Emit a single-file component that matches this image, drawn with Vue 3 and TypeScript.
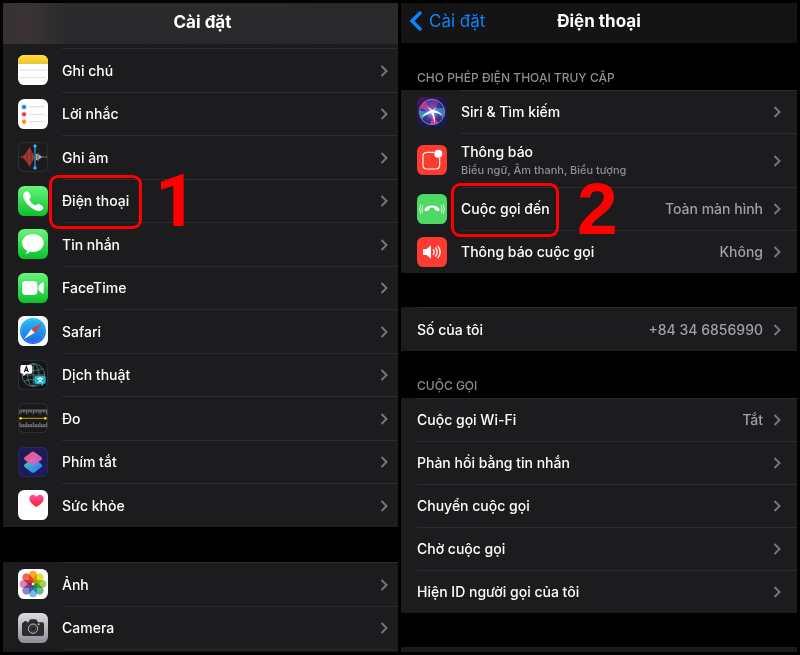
<script setup lang="ts">
interface Item {
  label: string
  icon?: string
  detail?: string
  value?: string
  step?: string
}

const apps: Item[] = [
  { label: 'Ghi chú', icon: 'notes' },
  { label: 'Lời nhắc', icon: 'reminders' },
  { label: 'Ghi âm', icon: 'memos' },
  { label: 'Điện thoại', icon: 'phone', step: '1' },
  { label: 'Tin nhắn', icon: 'messages' },
  { label: 'FaceTime', icon: 'facetime' },
  { label: 'Safari', icon: 'safari' },
  { label: 'Dịch thuật', icon: 'translate' },
  { label: 'Đo', icon: 'measure' },
  { label: 'Phím tắt', icon: 'shortcuts' },
  { label: 'Sức khỏe', icon: 'health' },
]

const media: Item[] = [
  { label: 'Ảnh', icon: 'photos' },
  { label: 'Camera', icon: 'camera' },
]

const access: Item[] = [
  { label: 'Siri & Tìm kiếm', icon: 'siri' },
  { label: 'Thông báo', icon: 'notify', detail: 'Biểu ngữ, Âm thanh, Biểu tượng' },
  { label: 'Cuộc gọi đến', icon: 'incoming', value: 'Toàn màn hình', step: '2' },
  { label: 'Thông báo cuộc gọi', icon: 'announce', value: 'Không' },
]

const mine: Item[] = [{ label: 'Số của tôi', value: '+84 34 6856990' }]

const calls: Item[] = [
  { label: 'Cuộc gọi Wi-Fi', value: 'Tắt' },
  { label: 'Phản hồi bằng tin nhắn' },
  { label: 'Chuyển cuộc gọi' },
  { label: 'Chờ cuộc gọi' },
  { label: 'Hiện ID người gọi của tôi' },
]

const petals = [
  { angle: 0, color: '#f9a11b' },
  { angle: 45, color: '#e3dd1a' },
  { angle: 90, color: '#9ccb3b' },
  { angle: 135, color: '#4fb98a' },
  { angle: 180, color: '#6cb0e4' },
  { angle: 225, color: '#8676c0' },
  { angle: 270, color: '#d479ae' },
  { angle: 315, color: '#f2544a' },
]

const waves = [
  [6, 2], [11, 4], [15, 8], [19, 14], [23, 22], [27, 34], [31, 46], [35, 58], [39, 44], [43, 26], [47, 14],
]
const echoes = [
  [56, 18], [60, 22], [64, 12], [68, 8], [72, 4], [77, 2], [82, 2], [86, 2],
]
const ticks = Array.from({ length: 17 }, (_, i) => ({ x: 6 + i * 5, long: i % 4 === 0 }))
</script>

<template>
  <svg class="sprite" aria-hidden="true">
    <defs>
      <linearGradient id="g-green" x1="0" y1="0" x2="0" y2="1">
        <stop offset="0" stop-color="#67f67c" /><stop offset="1" stop-color="#0bc02b" />
      </linearGradient>
      <linearGradient id="g-yellow" x1="0" y1="0" x2="0" y2="1">
        <stop offset="0" stop-color="#fddc4e" /><stop offset="1" stop-color="#f9c809" />
      </linearGradient>
      <linearGradient id="g-blue" x1="0" y1="0" x2="0" y2="1">
        <stop offset="0" stop-color="#22c3f6" /><stop offset="1" stop-color="#1f63e0" />
      </linearGradient>
      <linearGradient id="g-pink" x1="0" y1="0" x2="1" y2="1">
        <stop offset="0" stop-color="#fb5a6a" /><stop offset="0.5" stop-color="#e865a8" /><stop offset="1" stop-color="#b45bdc" />
      </linearGradient>
      <linearGradient id="g-teal" x1="0" y1="0" x2="1" y2="0.6">
        <stop offset="0" stop-color="#38d6a0" /><stop offset="0.5" stop-color="#30a8e0" /><stop offset="1" stop-color="#3a7af0" />
      </linearGradient>
      <linearGradient id="g-heart" x1="0" y1="0" x2="0" y2="1">
        <stop offset="0" stop-color="#fd4fae" /><stop offset="1" stop-color="#fb2020" />
      </linearGradient>
      <linearGradient id="g-silver" x1="0" y1="0" x2="0" y2="1">
        <stop offset="0" stop-color="#dcdce0" /><stop offset="1" stop-color="#8e8e94" />
      </linearGradient>
      <linearGradient id="g-siri" x1="0" y1="0" x2="1" y2="1">
        <stop offset="0" stop-color="#501560" /><stop offset="0.5" stop-color="#1c1850" /><stop offset="1" stop-color="#10204c" />
      </linearGradient>
      <radialGradient id="g-orb" cx="0.5" cy="0.5" r="0.5">
        <stop offset="0" stop-color="#ffffff" /><stop offset="0.2" stop-color="#8f8ce0" /><stop offset="0.6" stop-color="#43389c" /><stop offset="1" stop-color="#2a2470" />
      </radialGradient>
      <clipPath id="c-orb"><circle cx="45" cy="45" r="37" /></clipPath>
    </defs>

    <symbol id="notes" viewBox="0 0 90 90">
      <rect width="90" height="90" rx="19" fill="#fff" />
      <path d="M0 24V19A19 19 0 0 1 19 0H71A19 19 0 0 1 90 19V24Z" fill="url(#g-yellow)" />
      <path d="M0 25.500H90" stroke="#b9a565" stroke-width="2" />
      <path d="M3 45.500H87M3 68H87" stroke="#dedee2" stroke-width="3" />
    </symbol>

    <symbol id="reminders" viewBox="0 0 90 90">
      <rect width="90" height="90" rx="19" fill="#fff" />
      <path d="M34 23H80M34 46H80M34 68H80" stroke="#dcdce0" stroke-width="3" />
      <circle cx="18" cy="24" r="9" fill="#d3e6fd" /><circle cx="18" cy="24" r="6" fill="#1682f8" />
      <circle cx="18" cy="46" r="9" fill="#fddad8" /><circle cx="18" cy="46" r="6" fill="#f5342f" />
      <circle cx="18" cy="68" r="9" fill="#fde8cc" /><circle cx="18" cy="68" r="6" fill="#fb9410" />
    </symbol>

    <symbol id="memos" viewBox="0 0 90 90">
      <rect x="1" y="1" width="88" height="88" rx="18" fill="#1b1b1d" stroke="#3d3d40" stroke-width="2" />
      <path v-for="w in waves" :key="w[0]" :d="`M${w[0]} ${45 - w[1] / 2}v${w[1]}`" stroke="#b8382f" stroke-width="3.500" />
      <path v-for="w in echoes" :key="w[0]" :d="`M${w[0]} ${45 - w[1] / 2}v${w[1]}`" stroke="#c9c9cc" stroke-width="3" />
      <path d="M51 12V79" stroke="#1e9bd6" stroke-width="4" />
      <circle cx="51" cy="12" r="5" fill="#2cb8f2" /><circle cx="51" cy="78" r="5" fill="#2cb8f2" />
    </symbol>

    <symbol id="phone" viewBox="0 0 90 90">
      <rect width="90" height="90" rx="19" fill="url(#g-green)" />
      <path d="M20 19C23 15 28 14 31 18L38 28C40 31 39 34 36 37C34 39 34 41 36 44C39 49 44 54 50 57C52 58 54 58 56 56C59 53 62 53 65 55L74 61C77 64 77 68 73 71C68 76 61 76 53 73C37 66 23 52 17 37C14 30 15 24 20 19Z" fill="#fff" />
    </symbol>

    <symbol id="messages" viewBox="0 0 90 90">
      <rect width="90" height="90" rx="19" fill="url(#g-green)" />
      <path d="M45 15C63 15 77 27 77 42S63 69 45 69C41 69 38 69 35 68C32 72 28 74 23 74C26 71 27 68 27 65C18 60 12 52 12 42C12 27 27 15 45 15Z" fill="#fff" />
    </symbol>

    <symbol id="facetime" viewBox="0 0 90 90">
      <rect width="90" height="90" rx="19" fill="url(#g-green)" />
      <rect x="12" y="24" width="46" height="42" rx="11" fill="#fff" />
      <path d="M61 39L72 29C75 27 77 28 77 31V59C77 62 75 63 72 61L61 51Z" fill="#fff" />
    </symbol>

    <symbol id="safari" viewBox="0 0 90 90">
      <rect width="90" height="90" rx="19" fill="#fafafa" />
      <circle cx="45" cy="45" r="39" fill="url(#g-blue)" />
      <circle cx="45" cy="45" r="34" fill="none" stroke="#a8daf8" stroke-width="3" stroke-dasharray="1 3" />
      <path d="M72 22L40 40L50 50Z" fill="#f5352d" />
      <path d="M18 69L40 40L50 50Z" fill="#fff" />
    </symbol>

    <symbol id="translate" viewBox="0 0 90 90">
      <rect x="1" y="1" width="88" height="88" rx="18" fill="#161618" stroke="#3d3d40" stroke-width="2" />
      <g fill="none" stroke="#5f8f9c" stroke-width="2">
        <circle cx="46" cy="45" r="34" />
        <ellipse cx="46" cy="45" rx="17" ry="34" />
        <path d="M46 11V79M12 45H80M18 26Q46 38 74 26M18 64Q46 52 74 64" />
      </g>
      <path d="M12 15H38Q43 15 43 20V36Q43 41 38 41H24L16 49V41H12Q7 41 7 36V20Q7 15 12 15Z" fill="#fff" />
      <path d="M19 36L25 20L31 36M21 31H29" fill="none" stroke="#161618" stroke-width="3.500" />
      <path d="M54 47H78Q83 47 83 52V67Q83 72 78 72H75V79L67 72H54Q49 72 49 67V52Q49 47 54 47Z" fill="#27afc8" />
      <path d="M58 55H75M66 51V55M72 56Q69 64 59 68M61 56Q65 64 74 68" fill="none" stroke="#fff" stroke-width="3" />
    </symbol>

    <symbol id="measure" viewBox="0 0 90 90">
      <rect x="1" y="1" width="88" height="88" rx="18" fill="#19191b" stroke="#3d3d40" stroke-width="2" />
      <g stroke="#8c8c8f" stroke-width="2.500">
        <path d="M4 21H86M4 71H86" stroke-width="2" />
        <path v-for="t in ticks" :key="t.x" :d="`M${t.x} 21v${t.long ? 13 : 8}M${t.x} 71v${t.long ? -13 : -8}`" />
      </g>
      <path d="M8 46H82" stroke="#c9a800" stroke-width="3" />
      <circle cx="8" cy="46" r="4" fill="#ffe000" /><circle cx="82" cy="46" r="4" fill="#ffe000" />
    </symbol>

    <symbol id="shortcuts" viewBox="0 0 90 90">
      <rect x="1" y="1" width="88" height="88" rx="18" fill="#1d1c56" stroke="#34336a" stroke-width="2" />
      <path d="M21 51L41 37Q45 34 49 37L70 51Q75 56 70 61L50 76Q45 79 40 76L21 61Q15 56 21 51Z" fill="url(#g-teal)" />
      <path d="M21 30L41 15Q45 12 49 15L70 30Q75 35 70 39L50 54Q45 57 40 54L21 39Q15 35 21 30Z" fill="url(#g-pink)" opacity="0.940" />
    </symbol>

    <symbol id="health" viewBox="0 0 90 90">
      <rect width="90" height="90" rx="19" fill="#fff" />
      <path d="M55 51C43 43 34 35 34 26C34 19 39 14 45 14C50 14 53 17 55 20C58 17 61 14 66 14C72 14 77 19 77 26C77 35 68 43 55 51Z" fill="url(#g-heart)" />
    </symbol>

    <symbol id="photos" viewBox="0 0 90 90">
      <rect width="90" height="90" rx="19" fill="#fff" />
      <rect
        v-for="p in petals"
        :key="p.angle"
        class="petal"
        x="33"
        y="5"
        width="24"
        height="37"
        rx="12"
        :fill="p.color"
        :transform="`rotate(${p.angle} 45 45)`"
      />
    </symbol>

    <symbol id="camera" viewBox="0 0 90 90">
      <rect width="90" height="90" rx="19" fill="url(#g-silver)" />
      <path d="M18 28V25H27V28H31L35 21Q36 19 39 19H52Q55 19 56 21L60 28H73Q78 28 78 33V64Q78 69 73 69H17Q12 69 12 64V33Q12 28 17 28Z" fill="#2c2c2f" />
      <circle cx="45" cy="47" r="14" fill="#303034" stroke="#b9b9bd" stroke-width="3" />
      <circle cx="45" cy="47" r="8" fill="#26262a" stroke="#4a4a50" stroke-width="2" />
      <circle cx="62" cy="34" r="3" fill="#f6c914" />
    </symbol>

    <symbol id="siri" viewBox="0 0 90 90">
      <rect width="90" height="90" rx="19" fill="url(#g-siri)" />
      <circle cx="45" cy="45" r="38" fill="url(#g-orb)" />
      <g clip-path="url(#c-orb)">
        <path d="M45 42Q26 28 18 12Q42 4 68 12Q60 30 45 42Z" fill="#8a3fa4" opacity="0.600" />
        <path d="M45 42Q24 40 8 34Q12 18 26 12Q34 32 45 42Z" fill="#c8449c" opacity="0.800" />
        <path d="M45 42Q24 54 14 70Q4 54 8 40Q26 46 45 42Z" fill="#2a9ac4" opacity="0.900" />
        <path d="M45 42Q66 30 80 34Q84 48 76 64Q62 46 45 42Z" fill="#3fb2d8" opacity="0.600" />
        <path d="M45 42Q50 66 66 78Q50 86 40 80Q48 60 45 42Z" fill="#e53c8c" opacity="0.900" />
        <path d="M12 60Q34 40 45 40Q60 38 79 56Q60 46 50 47Q56 62 54 80Q48 58 43 48Q30 52 12 60Z" fill="#e9fbff" />
        <path d="M42 44L30 28L47 38L58 30L49 46Z" fill="#fff" opacity="0.700" />
      </g>
      <circle cx="45" cy="45" r="38" fill="none" stroke="#8a82b4" stroke-width="3" />
    </symbol>

    <symbol id="notify" viewBox="0 0 90 90">
      <rect width="90" height="90" rx="19" fill="#fe3b30" />
      <path d="M51 22H30Q18 22 18 34V60Q18 72 30 72H56Q68 72 68 60V39" fill="none" stroke="#fff" stroke-width="3.500" />
      <circle cx="64" cy="26" r="12" fill="#fff" />
    </symbol>

    <symbol id="incoming" viewBox="0 0 90 90">
      <rect width="90" height="90" rx="19" fill="#4cd964" />
      <path d="M24 43C33 32 57 32 66 43C69 48 67 53 64 52L55 49C52 48 53 45 52 42Q45 39 38 42C37 45 38 48 35 49L26 52C23 53 21 48 24 43Z" fill="#fff" />
      <path d="M17 35Q12 45 17 55M11 31Q4 45 11 59M73 35Q78 45 73 55M79 31Q86 45 79 59" fill="none" stroke="#fff" stroke-width="2.500" stroke-linecap="round" />
    </symbol>

    <symbol id="announce" viewBox="0 0 90 90">
      <rect width="90" height="90" rx="19" fill="#fe3b30" />
      <path d="M21 36H29L39 27Q42 25 42 29V61Q42 65 39 63L29 54H21Q18 54 18 51V39Q18 36 21 36Z" fill="#fff" />
      <path d="M49 38Q54 45 49 52M56 33Q65 45 56 57M63 28Q76 45 63 62" fill="none" stroke="#fff" stroke-width="4" stroke-linecap="round" />
    </symbol>

    <symbol id="chevron" viewBox="0 0 8 12">
      <path d="M1.500 1L6.500 6L1.500 11" fill="none" stroke="#76767a" stroke-width="2" />
    </symbol>
  </svg>

  <div class="page">
    <section class="panel panel-apps">
      <header class="bar">
        <h1>Cài đặt</h1>
      </header>
      <nav class="group apps">
        <a v-for="item in apps" :key="item.label" class="row" href="#">
          <svg class="icon"><use :href="`#${item.icon}`" /></svg>
          <span class="cell">
            <span class="label">{{ item.label }}</span>
            <svg class="chevron"><use href="#chevron" /></svg>
          </span>
          <span v-if="item.step" class="frame" />
          <strong v-if="item.step" class="step">{{ item.step }}</strong>
        </a>
      </nav>
      <nav class="group media">
        <a v-for="item in media" :key="item.label" class="row" href="#">
          <svg class="icon"><use :href="`#${item.icon}`" /></svg>
          <span class="cell">
            <span class="label">{{ item.label }}</span>
            <svg class="chevron"><use href="#chevron" /></svg>
          </span>
        </a>
        <div class="more" />
      </nav>
    </section>

    <section class="panel panel-phone">
      <header class="bar">
        <a class="back" href="#">
          <svg viewBox="0 0 14 20"><path d="M11 2L3 10L11 18" fill="none" stroke="#0a84ff" stroke-width="3.500" stroke-linecap="round" /></svg>
          Cài đặt
        </a>
        <h1>Điện thoại</h1>
      </header>
      <h2>CHO PHÉP ĐIỆN THOẠI TRUY CẬP</h2>
      <nav class="group">
        <a v-for="item in access" :key="item.label" class="row" :class="{ tall: item.detail }" href="#">
          <svg class="icon"><use :href="`#${item.icon}`" /></svg>
          <span class="cell">
            <span class="label">
              {{ item.label }}
              <small v-if="item.detail">{{ item.detail }}</small>
            </span>
            <span v-if="item.value" class="value">{{ item.value }}</span>
            <svg class="chevron"><use href="#chevron" /></svg>
          </span>
          <span v-if="item.step" class="frame" />
          <strong v-if="item.step" class="step">{{ item.step }}</strong>
        </a>
      </nav>
      <nav class="group mine">
        <a v-for="item in mine" :key="item.label" class="row" href="#">
          <span class="cell">
            <span class="label">{{ item.label }}</span>
            <span class="value">{{ item.value }}</span>
            <svg class="chevron"><use href="#chevron" /></svg>
          </span>
        </a>
      </nav>
      <h2>CUỘC GỌI</h2>
      <nav class="group">
        <a v-for="item in calls" :key="item.label" class="row" href="#">
          <span class="cell">
            <span class="label">{{ item.label }}</span>
            <span v-if="item.value" class="value">{{ item.value }}</span>
            <svg class="chevron"><use href="#chevron" /></svg>
          </span>
        </a>
      </nav>
      <div class="group next" />
    </section>
  </div>
</template>

<style>
body {
  background: #000;
}
</style>

<style scoped>
.sprite {
  position: absolute;
  width: 0;
  height: 0;
}
.petal {
  mix-blend-mode: multiply;
  opacity: 0.9;
}
.page {
  box-sizing: border-box;
  min-height: 100vh;
  padding: 3px;
  display: grid;
  grid-template-columns: 395fr 396fr;
  gap: 3px;
  background: #000;
  color: #fff;
  font-family: Inter, "Liberation Sans", sans-serif;
  font-size: 14px;
  font-weight: 500;
  line-height: 18px;
}
.panel {
  display: flex;
  flex-direction: column;
  min-width: 0;
}
.bar {
  display: grid;
  grid-template-columns: 1fr auto 1fr;
  align-items: center;
  height: 40px;
  padding: 0 8px;
  background: #141415;
}
.panel-apps .bar {
  height: 41px;
  padding: 0 4px 0 8px;
  background: linear-gradient(90deg, #353031 0, #3b3334 24px, #2a2a2c 64px, #29292b 100%);
}
h1 {
  grid-column: 2;
  margin: 0;
  padding-bottom: 4px;
  font-size: 17px;
  font-weight: 700;
  line-height: 20px;
}
.back {
  display: flex;
  align-items: center;
  gap: 6px;
  padding-bottom: 4px;
  color: #0a84ff;
  font-size: 17px;
  font-weight: 400;
  line-height: 20px;
  text-decoration: none;
}
.back svg {
  width: 14px;
  height: 20px;
}
h2 {
  margin: 0;
  padding: 26px 16px 3px;
  color: #8e8e93;
  font-size: 12px;
  font-weight: 500;
  line-height: 18px;
}
.group {
  background: #1c1c1e;
}
.apps {
  padding-top: 4px;
}
.media {
  flex: 1;
  margin-top: 35px;
}
.more {
  margin-left: 59px;
  border-top: 1px solid #2b2b2d;
}
.mine {
  margin-top: 34px;
}
.next {
  flex: 1;
  margin-top: 34px;
}
.row {
  position: relative;
  display: flex;
  height: 43px;
  padding-left: 16px;
  align-items: center;
  color: inherit;
  text-decoration: none;
}
.panel-apps .row {
  height: 44px;
  padding-left: 15px;
}
.panel-apps .row:nth-child(even) {
  height: 43px;
}
.mine .row {
  height: 44px;
}
.row.tall {
  height: 54px;
}
.icon {
  flex: none;
  width: 30px;
  height: 30px;
  margin-right: 14px;
}
.cell {
  flex: 1;
  align-self: stretch;
  display: flex;
  align-items: center;
  gap: 10px;
  box-sizing: border-box;
  padding-right: 16px;
  border-top: 1px solid #2b2b2d;
}
.panel-apps .cell {
  padding-right: 10px;
}
.label {
  flex: 1;
}
.label small {
  display: block;
  color: #8e8e93;
  font-size: 11px;
}
.value {
  color: #a0a0a5;
}
.chevron {
  width: 8px;
  height: 12px;
}
.frame {
  position: absolute;
  z-index: 1;
  box-sizing: border-box;
  top: -4px;
  left: 46px;
  width: 93px;
  height: 54px;
  border: 3px solid #fe0000;
  border-radius: 9px;
}
.panel-phone .frame {
  left: 50px;
  width: 108px;
}
.step {
  position: absolute;
  z-index: 1;
  top: -6px;
  left: 152px;
  color: #fe0000;
  font-family: Roboto, sans-serif;
  font-size: 73px;
  font-weight: 700;
  line-height: 56px;
}
.panel-phone .step {
  left: 176px;
  font-family: "Liberation Sans", Arial, sans-serif;
}
</style>
